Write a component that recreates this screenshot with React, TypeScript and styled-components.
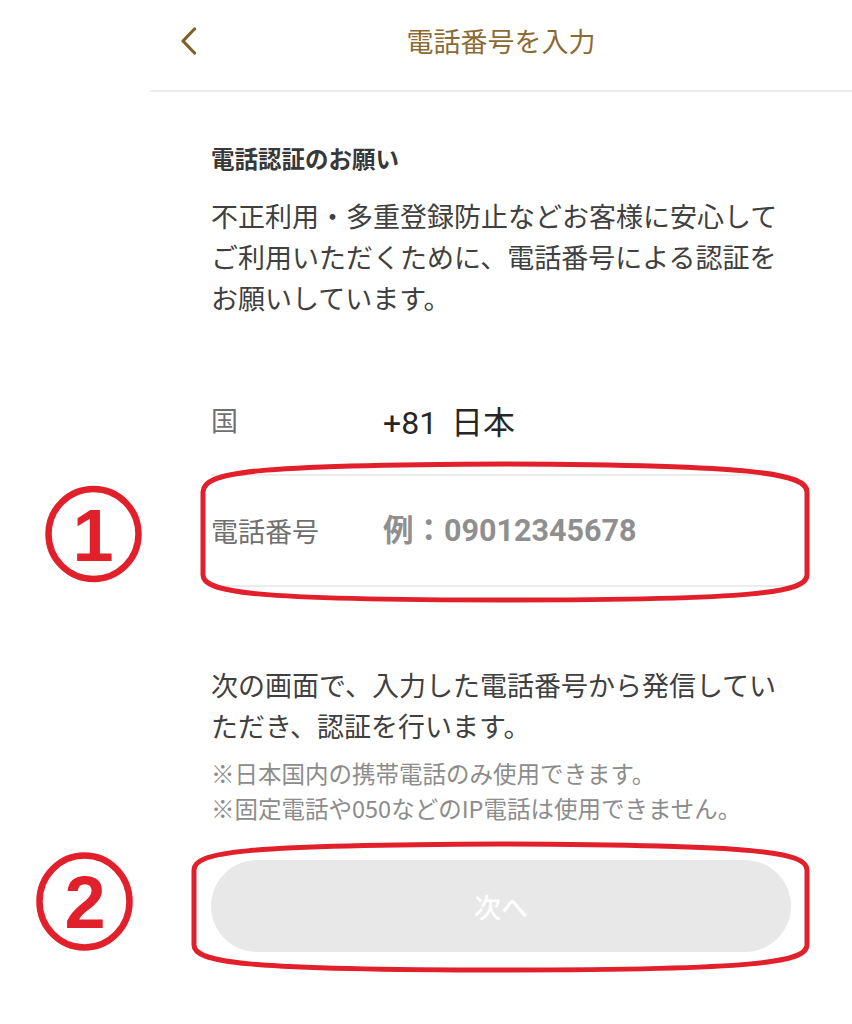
import React from "react";
import styled, { createGlobalStyle } from "styled-components";

const GlobalStyle = createGlobalStyle`
  html, body {
    margin: 0;
    padding: 0;
    background: #ffffff;
  }
  body {
    font-family: "Noto Sans CJK JP", "Noto Sans", sans-serif;
    -webkit-font-smoothing: antialiased;
  }
  * { box-sizing: border-box; }
`;

const Page = styled.div`
  position: relative;
  width: 852px;
  height: 1024px;
  display: flex;
  overflow: hidden;
  background: #fff;
`;

const Gutter = styled.div`
  width: 150px;
  flex: none;
`;

const Screen = styled.div`
  flex: 1;
  display: flex;
  flex-direction: column;
`;

const Header = styled.header`
  height: 92px;
  display: grid;
  grid-template-columns: 1fr auto 1fr;
  align-items: center;
  border-bottom: 2px solid #ececec;
  padding-bottom: 8px;
`;

const BackButton = styled.button`
  justify-self: start;
  margin-left: 28px;
  width: 22px;
  height: 30px;
  padding: 0;
  border: none;
  background: none;
  display: flex;
  align-items: center;
  justify-content: center;
`;

const Title = styled.h1`
  margin: 0;
  font-size: 27px;
  font-weight: 400;
  color: #8a6b35;
  letter-spacing: 0;
  line-height: 34px;
`;

const Content = styled.main`
  padding: 0 61px;
  display: flex;
  flex-direction: column;
`;

const SectionTitle = styled.h2`
  margin: 49px 0 0;
  font-size: 23.5px;
  line-height: 34px;
  font-weight: 700;
  color: #383838;
`;

const Paragraph = styled.p<{ $top: number }>`
  margin: ${(p) => p.$top}px 0 0;
  font-size: 27px;
  line-height: 41px;
  font-weight: 400;
  color: #404040;
`;

const Notes = styled.p`
  margin: 10px 0 0;
  font-size: 23.5px;
  line-height: 35px;
  color: #8c8c8c;
`;

const FieldRow = styled.div<{ $top: number }>`
  margin-top: ${(p) => p.$top}px;
  height: 111px;
  display: flex;
  align-items: center;
  border-bottom: 2px solid #ececec;
`;

const FieldLabel = styled.span`
  width: 172px;
  flex: none;
  font-size: 27px;
  color: #707070;
`;

const FieldValue = styled.span`
  font-family: Roboto, "Noto Sans CJK JP", sans-serif;
  font-size: 32px;
  word-spacing: 6px;
  color: #262626;
`;

const PhoneInput = styled.input`
  flex: 1;
  min-width: 0;
  border: none;
  outline: none;
  padding: 0;
  background: transparent;
  font-family: Roboto, "Noto Sans CJK JP", sans-serif;
  font-size: 30.5px;
  font-weight: 700;
  color: #262626;
  &::placeholder {
    color: #8f8f8f;
    opacity: 1;
  }
`;

const NextButton = styled.button`
  margin-top: 34px;
  height: 92px;
  width: 100%;
  border: none;
  border-radius: 46px;
  background: #e8e8e8;
  color: #ffffff;
  font-family: "Noto Sans CJK JP", sans-serif;
  font-size: 27px;
  font-weight: 500;
`;

const Overlay = styled.svg`
  position: absolute;
  left: 0;
  top: 0;
  width: 852px;
  height: 1024px;
  pointer-events: none;
`;

const RED = "#e1202b";

export default function App() {
  return (
    <>
      <GlobalStyle />
      <Page>
        <Gutter />
        <Screen>
          <Header>
            <BackButton aria-label="戻る">
              <svg width="18" height="28" viewBox="0 0 18 28">
                <polyline
                  points="14.5,2 3,14 14.5,26"
                  fill="none"
                  stroke="#7f6028"
                  strokeWidth="3.2"
                  strokeLinecap="round"
                  strokeLinejoin="round"
                />
              </svg>
            </BackButton>
            <Title>電話番号を入力</Title>
            <span />
          </Header>
          <Content>
            <SectionTitle>電話認証のお願い</SectionTitle>
            <Paragraph $top={20}>
              不正利用・多重登録防止などお客様に安心して
              <br />
              ご利用いただくために、電話番号による認証を
              <br />
              お願いしています。
            </Paragraph>
            <FieldRow $top={47}>
              <FieldLabel>国</FieldLabel>
              <FieldValue>+81 日本</FieldValue>
            </FieldRow>
            <FieldRow $top={0}>
              <FieldLabel>電話番号</FieldLabel>
              <PhoneInput type="tel" placeholder="例：09012345678" />
            </FieldRow>
            <Paragraph $top={77}>
              次の画面で、入力した電話番号から発信してい
              <br />
              ただき、認証を行います。
            </Paragraph>
            <Notes>
              ※日本国内の携帯電話のみ使用できます。
              <br />
              ※固定電話や050などのIP電話は使用できません。
            </Notes>
            <NextButton disabled>次へ</NextButton>
          </Content>
        </Screen>
        <Overlay viewBox="0 0 852 1024">
          <path
            d="M203,492 C203,472 250,465 505,464 C760,465 807,474 807,492 L807,575 C807,592 760,600 505,600 C250,600 203,592 203,575 Z"
            fill="none"
            stroke={RED}
            strokeWidth="5"
          />
          <path
            d="M194,870 C194,852 240,845 500,844 C760,845 807,852 807,870 L807,945 C807,962 760,970 500,970 C240,970 194,962 194,945 Z"
            fill="none"
            stroke={RED}
            strokeWidth="5"
          />
          <circle cx="93.5" cy="534" r="45" fill="none" stroke={RED} strokeWidth="6.5" />
          <text
            x="93"
            y="561"
            textAnchor="middle"
            fontFamily="'Liberation Sans', Arial, sans-serif"
            fontWeight="700"
            fontSize="74"
            fill={RED}
          >
            1
          </text>
          <ellipse cx="84.5" cy="901.5" rx="45" ry="46" fill="none" stroke={RED} strokeWidth="6.5" />
          <text
            x="85"
            y="928"
            textAnchor="middle"
            fontFamily="'Liberation Sans', Arial, sans-serif"
            fontWeight="700"
            fontSize="74"
            fill={RED}
          >
            2
          </text>
        </Overlay>
      </Page>
    </>
  );
}
